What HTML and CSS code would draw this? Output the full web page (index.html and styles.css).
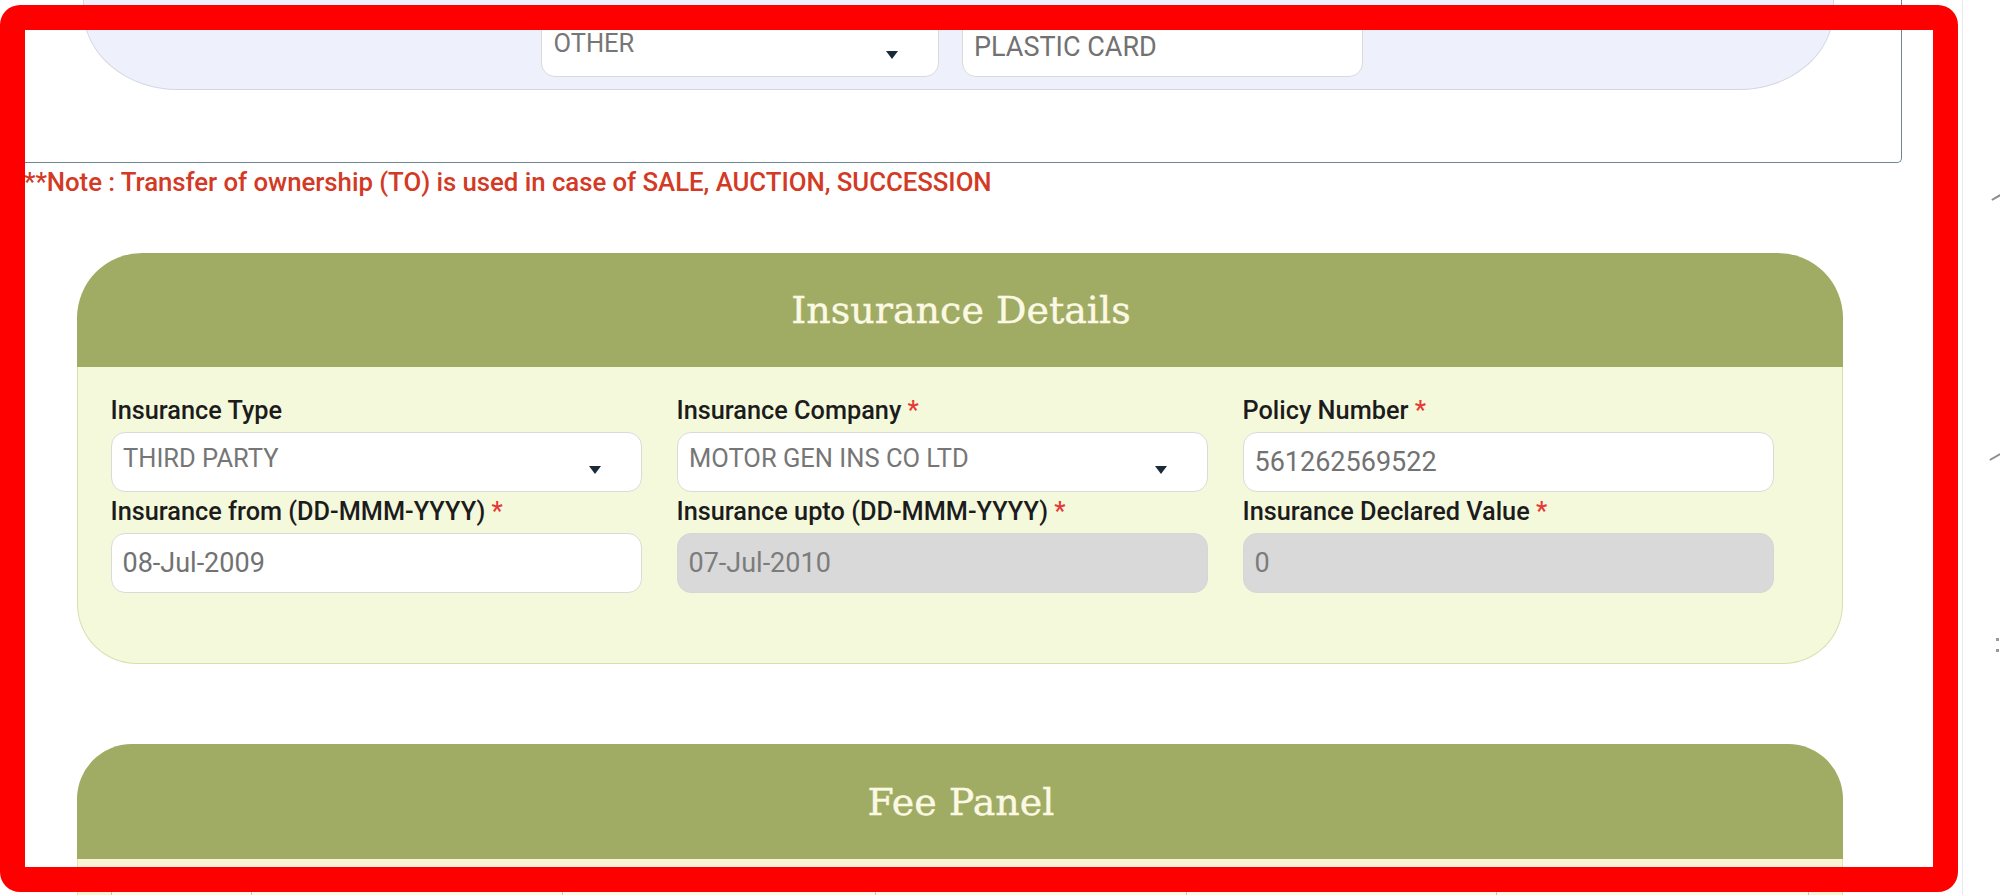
FILE: index.html
```html
<!DOCTYPE html>
<html lang="en">
<head>
<meta charset="utf-8">
<title>Insurance Details</title>
<link rel="stylesheet" href="styles.css">
</head>
<body>
<div class="screen">
  <div class="main">
    <div class="top-box">
      <div class="blue-panel">
        <div class="select sel-other"><span class="sel-text">OTHER</span><span class="caret"></span></div>
        <div class="text-input ti-card">PLASTIC CARD</div>
      </div>
    </div>

    <p class="note">**Note : Transfer of ownership (TO) is used in case of SALE, AUCTION, SUCCESSION</p>

    <section class="panel">
      <h2 class="panel-head">Insurance Details</h2>
      <div class="panel-body">
        <div class="field">
          <div class="label">Insurance Type</div>
          <div class="select"><span class="sel-text">THIRD PARTY</span><span class="caret"></span></div>
        </div>
        <div class="field">
          <div class="label">Insurance Company <span class="req">*</span></div>
          <div class="select"><span class="sel-text">MOTOR GEN INS CO LTD</span><span class="caret"></span></div>
        </div>
        <div class="field">
          <div class="label">Policy Number <span class="req">*</span></div>
          <div class="text-input">561262569522</div>
        </div>
        <div class="field">
          <div class="label">Insurance from (DD-MMM-YYYY) <span class="req">*</span></div>
          <div class="text-input">08-Jul-2009</div>
        </div>
        <div class="field">
          <div class="label">Insurance upto (DD-MMM-YYYY) <span class="req">*</span></div>
          <div class="text-input disabled">07-Jul-2010</div>
        </div>
        <div class="field">
          <div class="label">Insurance Declared Value <span class="req">*</span></div>
          <div class="text-input disabled">0</div>
        </div>
      </div>
    </section>

    <section class="panel fee">
      <h2 class="panel-head fee-head">Fee Panel</h2>
      <div class="fee-body">
        <div class="fee-row">
          <div class="cell"></div>
          <div class="cell"></div>
          <div class="cell"></div>
          <div class="cell"></div>
          <div class="cell"></div>
          <div class="cell last"></div>
        </div>
      </div>
    </section>
  </div>
  <aside class="side">
    <span class="side-mark m1"></span>
    <span class="side-mark m2"></span>
    <span class="side-dots"></span>
  </aside>
</div>
<div class="frame"></div>
</body>
</html>
```

FILE: styles.css
```css
* { box-sizing: border-box; }

html, body {
  margin: 0;
  padding: 0;
  background: #ffffff;
  overflow: hidden;
}

body {
  width: 2000px;
  height: 895px;
  font-family: Roboto, "Liberation Sans", Arial, sans-serif;
  position: relative;
}

.screen {
  display: flex;
  width: 2000px;
  height: 895px;
  overflow: hidden;
}

.main {
  width: 1962px;
  flex: none;
}

/* ---------- top (previous section) ---------- */
.top-box {
  display: flow-root;
  width: 1902px;
  height: 163px;
  border-right: 1.5px solid #6d8793;
  border-bottom: 1.5px solid #6d8793;
  border-bottom-right-radius: 5px;
}

.blue-panel {
  margin-top: -40px;
  margin-left: 83px;
  width: 1751px;
  height: 130px;
  background: #eef1fb;
  border: 1.5px solid #d2d7e3;
  border-top: none;
  border-radius: 0 0 95px 95px / 0 0 80px 80px;
  display: flex;
  gap: 23px;
  padding: 57px 0 0 457px;
}

.sel-other { width: 398px; padding-right: 44px; }
.ti-card { width: 401px; font-size: 26px; }

/* ---------- note ---------- */
.note {
  margin: 4px 0 0 0;
  padding-left: 24px;
  font-size: 25.8px;
  line-height: 30px;
  font-weight: 500;
  color: #d33a25;
  letter-spacing: -0.05px;
}

/* ---------- panels ---------- */
.panel {
  margin: 56px 0 0 77px;
  width: 1766px;
}

.panel-head {
  margin: 0;
  height: 114px;
  background: #a0ab63;
  border-radius: 65px 65px 0 0;
  display: flex;
  align-items: center;
  justify-content: center;
  font-family: "DejaVu Serif", "Liberation Serif", serif;
  font-weight: normal;
  font-size: 38px;
  color: #fbf9e4;
  -webkit-text-stroke: 0.4px #fbf9e4;
  padding-left: 2px;
}

.panel-body {
  background: #f5f9dc;
  border: 1.5px solid #d9dfac;
  border-top: none;
  border-radius: 0 0 60px 60px;
  display: grid;
  grid-template-columns: repeat(3, 531px);
  column-gap: 35px;
  row-gap: 5px;
  padding: 29px 0 70px 32.5px;
}

.label {
  font-size: 25.3px;
  line-height: 30px;
  font-weight: 500;
  color: #1c1c1c;
  margin-bottom: 6px;
  white-space: nowrap;
}

.req { color: #e53935; }

.select {
  height: 60px;
  background: #ffffff;
  border: 1.5px solid #dadada;
  border-radius: 14px;
  display: flex;
  align-items: flex-start;
  padding: 11px 40px 0 11.5px;
  font-size: 25.5px;
  line-height: 28px;
  color: #767676;
}

.sel-text { flex: 1; white-space: nowrap; }

.caret {
  flex: none;
  width: 0;
  height: 0;
  margin-top: 22px;
  border-left: 6.5px solid transparent;
  border-right: 6.5px solid transparent;
  border-top: 8px solid #1b2a38;
}

.text-input {
  height: 60px;
  background: #ffffff;
  border: 1.5px solid #dadada;
  border-radius: 14px;
  display: flex;
  align-items: center;
  padding: 0 11px;
  font-size: 27px;
  color: #727272;
  white-space: nowrap;
}

.text-input.disabled {
  background: #d9d9d9;
  border-color: #d6d6d6;
  color: #7c7c7c;
}

/* ---------- fee panel ---------- */
.fee { margin-top: 80px; }

.fee-head {
  border-radius: 55px 55px 0 0;
  height: 115px;
}

.fee-body {
  background: #f8f4d4;
  border-left: 1.5px solid #e4e0b4;
  border-right: 1.5px solid #e4e0b4;
  padding: 8px 32.5px 0 32.5px;
  height: 120px;
}

.fee-row {
  display: grid;
  grid-template-columns: 140px 311px 313px 311px 310px 313px;
  height: 80px;
  background: #fcf9e6;
  border-top: 1px solid #d0d0d0;
}

.cell { border-left: 1px solid #c6c6c6; }
.cell.last { border-right: 1px solid #c6c6c6; }

/* ---------- right edge ---------- */
.side {
  width: 38px;
  flex: none;
  border-left: 1.5px solid #e7e9ec;
  display: flex;
  flex-direction: column;
  overflow: hidden;
}

.side-mark {
  display: block;
  width: 12px;
  height: 2px;
  background: #8c8c8c;
  transform: rotate(-30deg);
  margin-left: 28px;
}
.m1 { margin-top: 196px; }
.m2 { margin-top: 258px; margin-left: 26px; }

.side-dots {
  display: block;
  width: 3px;
  height: 14px;
  margin: 180px 0 0 33px;
  border-top: 3px solid #9a9a9a;
  border-bottom: 3px solid #9a9a9a;
}

/* ---------- annotation frame (overlay) ---------- */
.frame {
  position: absolute;
  left: 0;
  top: 5px;
  width: 1958px;
  height: 887px;
  border: 25px solid #ff0000;
  border-radius: 20px;
  pointer-events: none;
}
```
